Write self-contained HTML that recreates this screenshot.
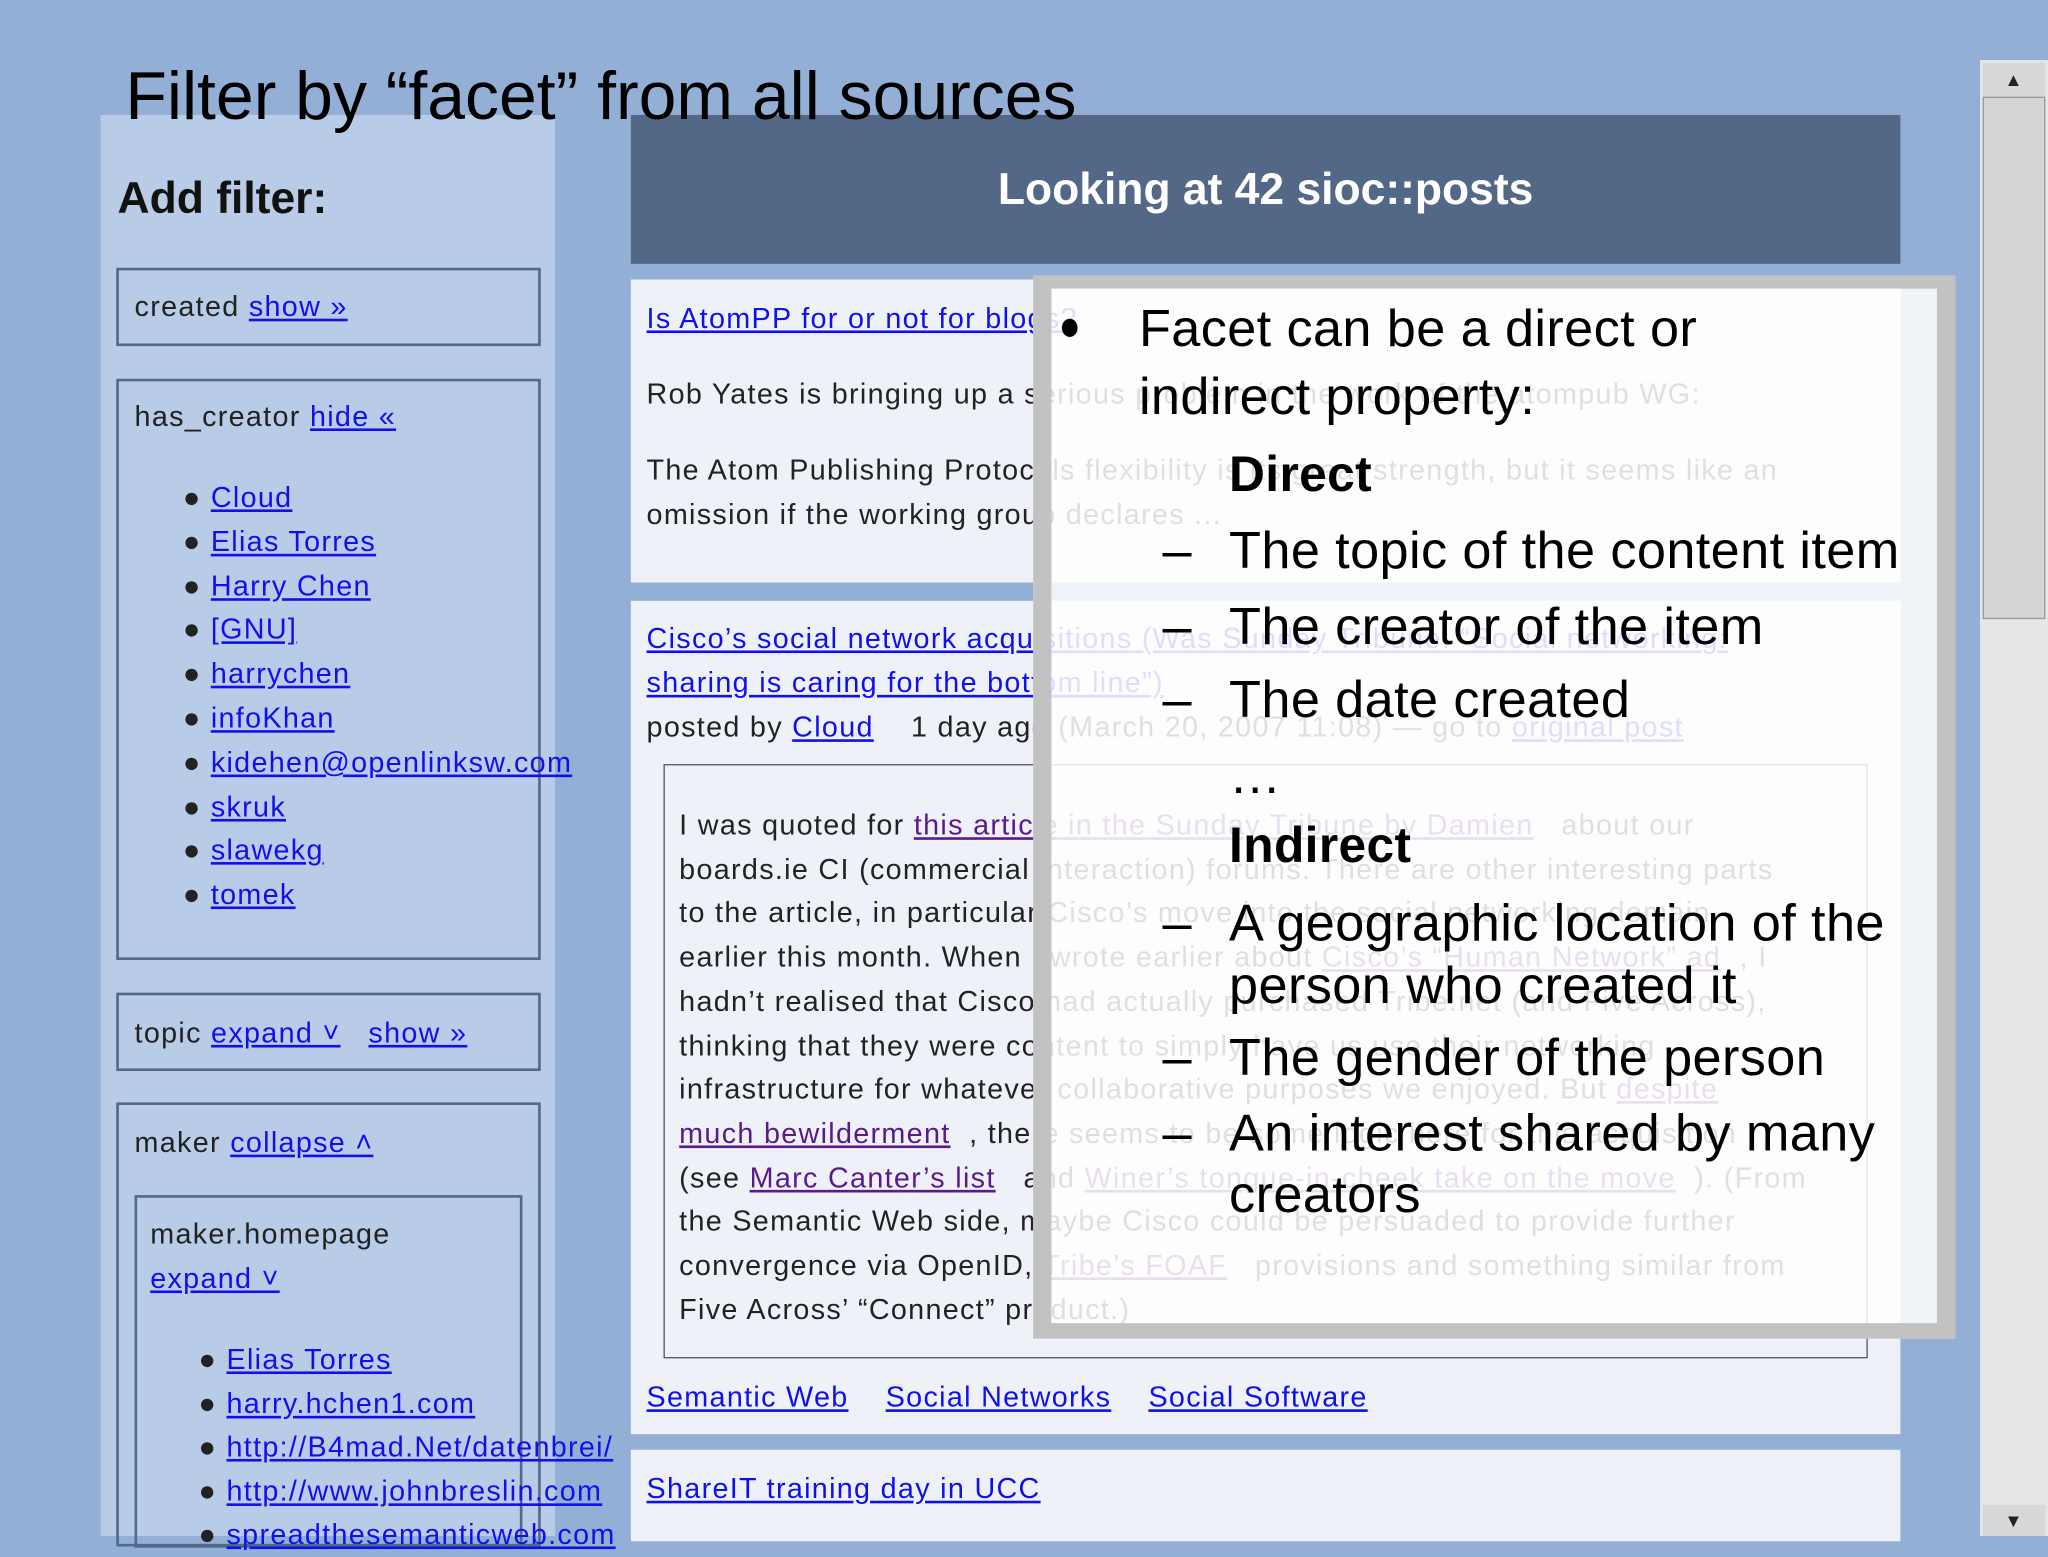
<!DOCTYPE html>
<html><head><meta charset="utf-8"><style>
html,body{margin:0;padding:0;width:2048px;height:1536px;overflow:hidden;background:#93afd6}
#s{position:absolute;left:0;top:0;width:1568px;height:1176px;transform:scale(1.306122);transform-origin:0 0;font-family:"Liberation Sans","DejaVu Sans",sans-serif;font-size:22px;color:#222;letter-spacing:1px}
.a{position:absolute;white-space:nowrap}
a{color:#1010ee;text-decoration:underline}
a.v{color:#5a1a8b}
.box{position:absolute;border:2px solid #4f6a8a;box-sizing:border-box}
.bul{position:absolute;width:10px;height:12px;border-radius:50%;background:#000}
.ov{position:absolute;color:#000;font-size:40px;white-space:nowrap;letter-spacing:0.3px}
</style></head><body><div id="s">
<div class="a" style="left:77px;top:88px;width:348px;height:1088px;background:#b8cce8"></div>
<div class="a" style="left:483px;top:88px;width:972px;height:114px;background:#536886"></div>
<div class="a" style="left:483px;top:88px;width:972px;height:114px;line-height:114px;text-align:center;color:#fff;font-weight:bold;font-size:34px;letter-spacing:0">Looking at 42 sioc::posts</div>
<div class="a" style="left:96px;top:44px;font-size:52px;color:#000;letter-spacing:0">Filter by “facet” from all sources</div>
<div class="a" style="left:90px;top:133px;font-size:34px;font-weight:bold;color:#111;letter-spacing:0">Add filter:</div>
<div class="box" style="left:89px;top:205px;width:325px;height:60px"></div>
<div class="a" style="left:103px;top:222px">created <a>show »</a></div>
<div class="box" style="left:89px;top:290px;width:325px;height:445px"></div>
<div class="a" style="left:103px;top:306px">has_creator <a>hide «</a></div>
<div class="a" style="left:140px;top:364px;line-height:33.8px">
<div>●&nbsp;<a>Cloud</a></div><div>●&nbsp;<a>Elias Torres</a></div><div>●&nbsp;<a>Harry Chen</a></div><div>●&nbsp;<a>[GNU]</a></div><div>●&nbsp;<a>harrychen</a></div><div>●&nbsp;<a>infoKhan</a></div><div>●&nbsp;<a>kidehen@openlinksw.com</a></div><div>●&nbsp;<a>skruk</a></div><div>●&nbsp;<a>slawekg</a></div><div>●&nbsp;<a>tomek</a></div></div>
<div class="box" style="left:89px;top:760px;width:325px;height:60px"></div>
<div class="a" style="left:103px;top:778px">topic <a>expand ˅</a> &nbsp; <a>show »</a></div>
<div class="box" style="left:89px;top:844px;width:325px;height:340px"></div>
<div class="a" style="left:103px;top:862px">maker <a>collapse ˄</a></div>
<div class="box" style="left:103px;top:915px;width:297px;height:270px"></div>
<div class="a" style="left:115px;top:932px">maker.homepage</div>
<div class="a" style="left:115px;top:966px"><a>expand ˅</a></div>
<div class="a" style="left:152px;top:1024px;line-height:33.6px">
<div>●&nbsp;<a>Elias Torres</a></div><div>●&nbsp;<a>harry.hchen1.com</a></div><div>●&nbsp;<a>http://B4mad.Net/datenbrei/</a></div><div>●&nbsp;<a>http://www.johnbreslin.com</a></div><div>●&nbsp;<a>spreadthesemanticweb.com</a></div></div>
<div class="a" style="left:483px;top:214px;width:972px;height:232px;background:#eef2f8"></div>
<div class="a" style="left:483px;top:460px;width:972px;height:638px;background:#eef2f8"></div>
<div class="a" style="left:483px;top:1110px;width:972px;height:70px;background:#eef2f8"></div>
<div class="a" style="left:495px;top:231px"><a>Is AtomPP for or not for blogs?</a></div>
<div class="a" style="left:495px;top:289px">Rob Yates is bringing up a serious problem in the work of the atompub WG:</div>
<div class="a" style="left:495px;top:347px">The Atom Publishing Protocols flexibility is its great strength, but it seems like an</div>
<div class="a" style="left:495px;top:381px">omission if the working group declares ...</div>
<div class="a" style="left:495px;top:476px"><a>Cisco’s social network acquisitions (Was Sunday Tribune: “Social networking:</a></div>
<div class="a" style="left:495px;top:510px"><a>sharing is caring for the bottom line”)</a></div>
<div class="a" style="left:495px;top:544px">posted by <a>Cloud</a> &nbsp;&nbsp; 1 day ago (March 20, 2007 11:08) — go to <a>original post</a></div>
<div class="a" style="left:508px;top:585px;width:922px;height:455px;border:1px solid #555;box-sizing:border-box"></div>
<div class="a" style="left:520px;top:615px;line-height:33.7px">
<div>I was quoted for <a class="v">this article in the Sunday Tribune by Damien</a> &nbsp; about our</div>
<div>boards.ie CI (commercial interaction) forums. There are other interesting parts</div>
<div>to the article, in particular Cisco’s move into the social networking domain</div>
<div>earlier this month. When I wrote earlier about <a class="v">Cisco’s “Human Network” ad</a> &nbsp;, I</div>
<div>hadn’t realised that Cisco had actually purchased Tribe.net (and Five Across),</div>
<div>thinking that they were content to simply have us use their networking</div>
<div>infrastructure for whatever collaborative purposes we enjoyed. But <a class="v">despite</a></div>
<div><a class="v">much bewilderment</a> &nbsp;, there seems to be some logic here for this acquisition</div>
<div>(see <a class="v">Marc Canter’s list</a> &nbsp; and <a class="v">Winer’s tongue-in-cheek take on the move</a> &nbsp;). (From</div>
<div>the Semantic Web side, maybe Cisco could be persuaded to provide further</div>
<div>convergence via OpenID, <a class="v">Tribe’s FOAF</a> &nbsp; provisions and something similar from</div>
<div>Five Across’ “Connect” product.)</div></div>
<div class="a" style="left:495px;top:1057px"><a>Semantic Web</a> &nbsp;&nbsp; <a>Social Networks</a> &nbsp;&nbsp; <a>Social Software</a></div>
<div class="a" style="left:495px;top:1127px"><a>ShareIT training day in UCC</a></div>
<div class="a" style="left:1516px;top:46px;width:52px;height:1130px;background:#e6e6e6"></div>
<div class="a" style="left:1518px;top:48px;width:48px;height:26px;background:#d8d8d8;font-size:14px;text-align:center;line-height:26px">▲</div>
<div class="a" style="left:1518px;top:74px;width:48px;height:400px;background:#d4d4d4;border:1px solid #999;box-sizing:border-box"></div>
<div class="a" style="left:1518px;top:1152px;width:48px;height:24px;background:#d8d8d8;font-size:14px;text-align:center;line-height:24px">▼</div>
<div class="a" style="left:791px;top:211px;width:706px;height:814px;box-sizing:border-box;border:14px solid rgba(192,192,192,0.97);border-top-width:10px;border-bottom-width:12px;background:rgba(255,255,255,0.86)"></div>
<div class="bul" style="left:813px;top:244px;width:12px;height:14px"></div>
<div class="ov" style="left:872px;top:230px">Facet can be a direct or</div>
<div class="ov" style="left:872px;top:282px">indirect property:</div>
<div class="ov" style="left:941px;top:343px;font-size:38px;font-weight:bold">Direct</div>
<div class="ov" style="left:890px;top:400px">–</div><div class="ov" style="left:941px;top:400px">The topic of the content item</div>
<div class="ov" style="left:890px;top:458px">–</div><div class="ov" style="left:941px;top:458px">The creator of the item</div>
<div class="ov" style="left:890px;top:514px">–</div><div class="ov" style="left:941px;top:514px">The date created</div>
<div class="ov" style="left:941px;top:572px">…</div>
<div class="ov" style="left:941px;top:627px;font-size:38px;font-weight:bold">Indirect</div>
<div class="ov" style="left:890px;top:685px">–</div><div class="ov" style="left:941px;top:685px">A geographic location of the</div>
<div class="ov" style="left:941px;top:733px">person who created it</div>
<div class="ov" style="left:890px;top:788px">–</div><div class="ov" style="left:941px;top:788px">The gender of the person</div>
<div class="ov" style="left:890px;top:846px">–</div><div class="ov" style="left:941px;top:846px">An interest shared by many</div>
<div class="ov" style="left:941px;top:893px">creators</div>
</div></body></html>
